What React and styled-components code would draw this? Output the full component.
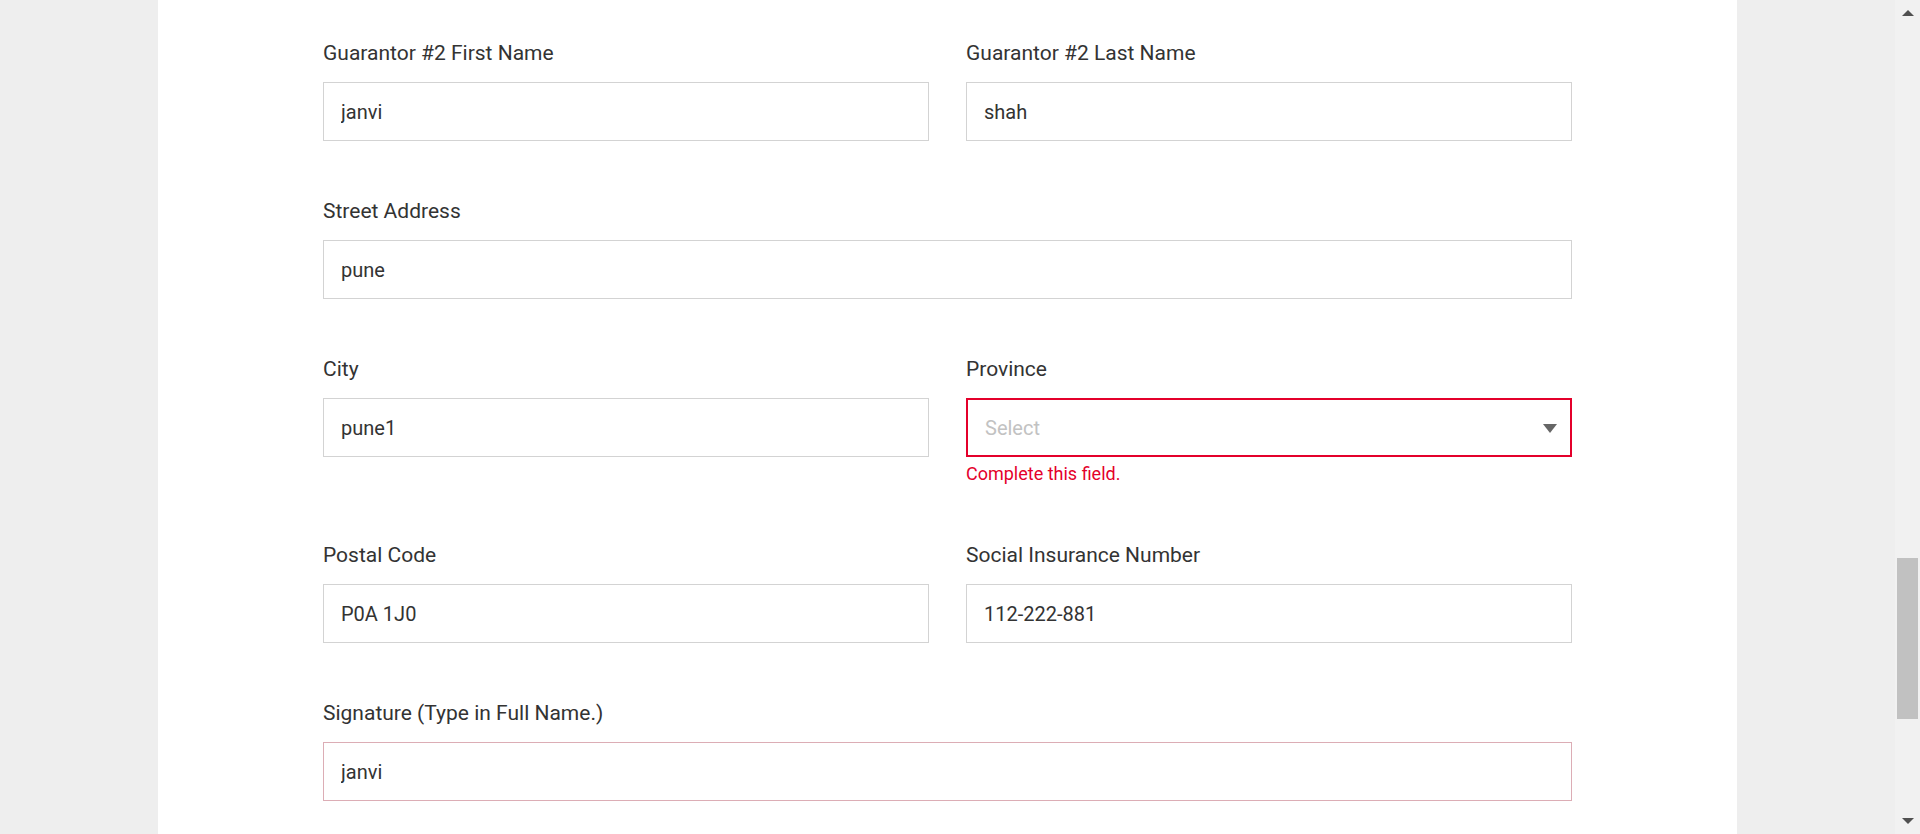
import styled, { createGlobalStyle } from "styled-components";

const GlobalStyle = createGlobalStyle`
  html, body {
    margin: 0;
    padding: 0;
    height: 100%;
    overflow: hidden;
    background: #eeeeee;
    font-family: Roboto, "Liberation Sans", sans-serif;
  }
  #root { height: 100%; }
`;

const Page = styled.div`
  display: flex;
  height: 100vh;
`;

const Main = styled.main`
  flex: 1;
  display: flex;
  justify-content: center;
`;

const Panel = styled.section`
  width: 1579px;
  background: #ffffff;
  box-sizing: border-box;
  padding: 41px 165px 0;
`;

const Form = styled.form`
  display: grid;
  grid-template-columns: 1fr 1fr;
  column-gap: 37px;
  row-gap: 58px;
  align-items: start;
`;

const Field = styled.div`
  display: flex;
  flex-direction: column;
  grid-column: ${(p) => (p.$wide ? "1 / -1" : "auto")};
`;

const Label = styled.label`
  font-size: 21px;
  line-height: 25px;
  color: #333333;
  margin-bottom: 16px;
`;

const Input = styled.input`
  box-sizing: border-box;
  height: 59px;
  width: 100%;
  padding: 0 17px;
  border: 1px solid ${(p) => (p.$signature ? "#dcadb5" : "#d3d3d3")};
  border-radius: 0;
  background: #fff;
  font-family: Roboto, "Liberation Sans", sans-serif;
  font-size: 20px;
  color: #333333;
  outline: none;
`;

const SelectBox = styled.div`
  box-sizing: border-box;
  height: 59px;
  display: flex;
  align-items: center;
  justify-content: space-between;
  padding: 0 13px 0 17px;
  border: 2px solid #e4002b;
  font-size: 20px;
  color: #c2c2c2;
`;

const Caret = styled.span`
  width: 0;
  height: 0;
  border-left: 7.5px solid transparent;
  border-right: 7.5px solid transparent;
  border-top: 9px solid #666666;
  margin-top: 2px;
`;

const ErrorText = styled.div`
  margin-top: 6px;
  font-size: 18px;
  line-height: 22px;
  color: #e4002b;
`;

const Scrollbar = styled.div`
  width: 25px;
  background: #f1f1f1;
  display: flex;
  flex-direction: column;
  align-items: center;
`;

const Arrow = styled.span`
  width: 0;
  height: 0;
  border-left: 6px solid transparent;
  border-right: 6px solid transparent;
  ${(p) =>
    p.$down
      ? "border-top: 6px solid #505050; margin-bottom: 10px;"
      : "border-bottom: 6px solid #505050; margin-top: 10px;"}
`;

const Track = styled.div`
  flex: 1;
  width: 100%;
  display: flex;
  flex-direction: column;
  align-items: center;
  padding-top: 542px;
  box-sizing: border-box;
`;

const Thumb = styled.div`
  width: 21px;
  height: 161px;
  background: #c1c1c1;
`;

const fields = [
  { label: "Guarantor #2 First Name", value: "janvi" },
  { label: "Guarantor #2 Last Name", value: "shah" },
  { label: "Street Address", value: "pune", wide: true },
  { label: "City", value: "pune1" },
  { label: "Province", select: true },
  { label: "Postal Code", value: "P0A 1J0" },
  { label: "Social Insurance Number", value: "112-222-881" },
  { label: "Signature (Type in Full Name.)", value: "janvi", wide: true, signature: true },
];

export default function App() {
  return (
    <>
      <GlobalStyle />
      <Page>
        <Main>
          <Panel>
            <Form onSubmit={(e) => e.preventDefault()}>
              {fields.map((f) => (
                <Field key={f.label} $wide={f.wide}>
                  <Label>{f.label}</Label>
                  {f.select ? (
                    <>
                      <SelectBox>
                        <span>Select</span>
                        <Caret />
                      </SelectBox>
                      <ErrorText>Complete this field.</ErrorText>
                    </>
                  ) : (
                    <Input defaultValue={f.value} $signature={f.signature} />
                  )}
                </Field>
              ))}
            </Form>
          </Panel>
        </Main>
        <Scrollbar>
          <Arrow />
          <Track>
            <Thumb />
          </Track>
          <Arrow $down />
        </Scrollbar>
      </Page>
    </>
  );
}
